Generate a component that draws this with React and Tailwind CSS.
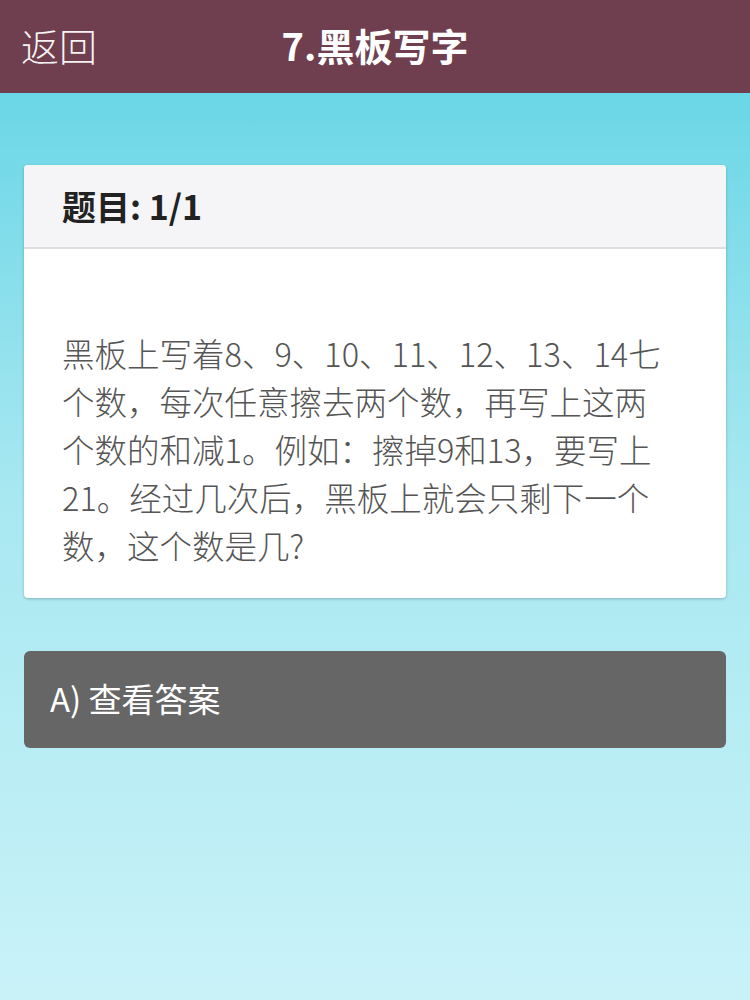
import React from 'react'

const lines = [
  '黑板上写着8、9、10、11、12、13、14七',
  '个数，每次任意擦去两个数，再写上这两',
  '个数的和减1。例如：擦掉9和13，要写上',
  '21。经过几次后，黑板上就会只剩下一个',
  '数，这个数是几?',
]

export default function App() {
  return (
    <div className="min-h-[1000px] w-[750px] bg-gradient-to-b from-[#58d2e4] via-[#a8e8f1] to-[#c9f2f8] font-['Noto_Sans_CJK_SC',sans-serif]">
      <header className="h-[93px] bg-[#6f3f4f] flex items-center relative pb-[4px]">
        <button className="pl-[21px] text-[38px] text-white/95 font-light leading-none">返回</button>
        <h1 className="absolute left-0 right-0 text-center text-[38px] font-bold text-white leading-none pointer-events-none">
          7.黑板写字
        </h1>
      </header>

      <main className="px-[24px] pt-[72px]">
        <section className="bg-white rounded-[4px] shadow-[0_1px_3px_rgba(0,0,0,0.25)] overflow-hidden">
          <div className="h-[84px] bg-[#f5f5f7] border-b-2 border-[#dedee0] flex items-center px-[38px]">
            <h2 className="text-[34px] font-bold text-[#222] leading-none">题目: 1/1</h2>
          </div>
          <div className="px-[38px] pt-[80px] pb-[29px]">
            <p className="text-[32.5px] leading-[48px] text-[#555] font-light whitespace-nowrap">
              {lines.map((l, i) => (
                <span key={i} className="block">{l}</span>
              ))}
            </p>
          </div>
        </section>

        <button className="mt-[53px] w-full h-[97px] bg-[#666666] rounded-[6px] text-left pl-[26px] pb-[2px] text-[33px] text-white">
          A) 查看答案
        </button>
      </main>
    </div>
  )
}
